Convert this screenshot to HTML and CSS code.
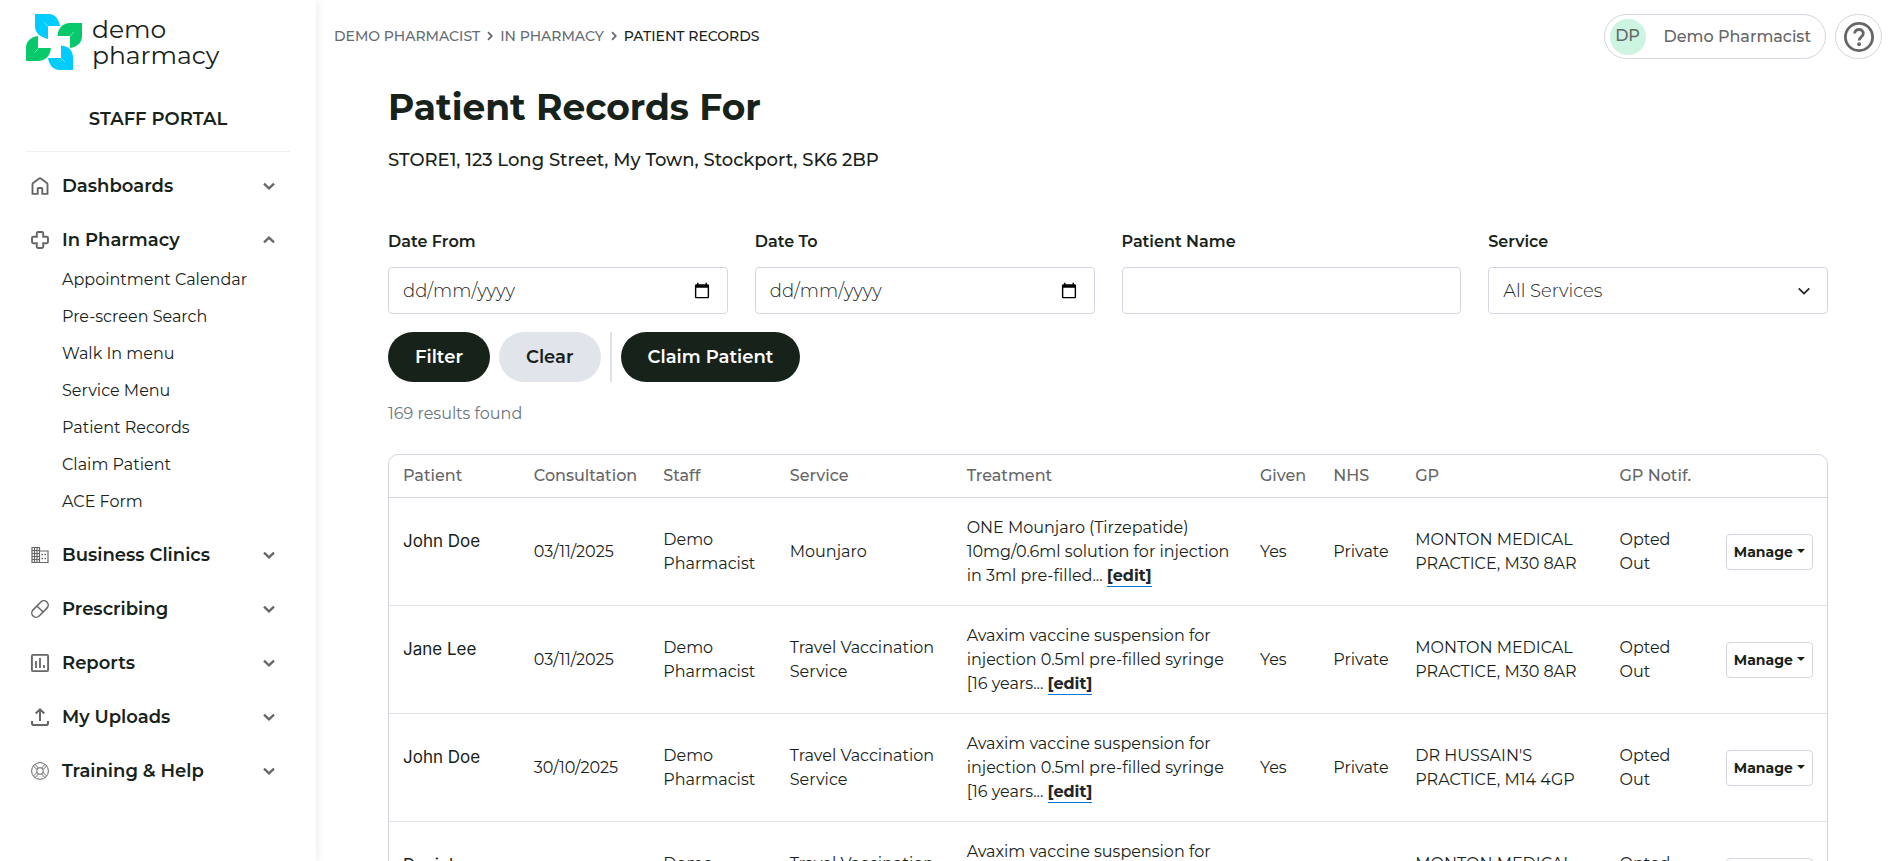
FILE: index.html
```html
<!DOCTYPE html>
<html lang="en">

<head>
    <meta charset="UTF-8" />
    <meta name="viewport" content="width=device-width, initial-scale=1.0" />
    <title>Patient Records</title>
    <link rel="stylesheet" href="styles.css">
</head>

<body>
    <!-- Shared icons -->
    <svg class="sprite" aria-hidden="true">
        <symbol id="chevron" viewBox="0 0 14 14">
            <path d="M2 4.600 7 9.400l5-4.800" fill="none" stroke="currentColor" stroke-width="2.300" />
        </symbol>
        <symbol id="crumb-arrow" viewBox="0 0 6 10">
            <path d="M1 1.200 4.800 5 1 8.800" fill="none" stroke="currentColor" stroke-width="1.800" />
        </symbol>
        <symbol id="caret" viewBox="0 0 8 4">
            <path d="M0 0h8L4 4z" fill="currentColor" />
        </symbol>
    </svg>

    <div class="layout">
        <aside class="sidebar">
            <a class="logo" href="#">
                <svg class="logo-mark" viewBox="0 0 56 56" aria-hidden="true">
                    <path d="M9 0h14c6 0 10 5 11 12H22v13C14 23 9 19 9 12z" fill="#00ccff" />
                    <path d="M56 9v13c0 7-5 11-12 12V22H31.500C32 14 37 9 44 9z" fill="#05c96b" />
                    <path d="M47 56H34c-7 0-11-5-12-12h13V31.500C43 32 47 37 47 44z" fill="#00ccff" />
                    <path d="M0 47V34c0-7 5-11 12-12v12h13c-1 8-6 13-13 13z" fill="#05c96b" />
                    <path d="M22 12.500l-4-4M44 22l4-4M35 44l4 4M12.500 34.500l-4 4" stroke="#fff" stroke-opacity=".6" stroke-width=".8" />
                </svg>
                <span class="logo-text">demo<br>pharmacy</span>
            </a>
            <div class="portal-title">STAFF PORTAL</div>
            <nav class="nav">
                <button type="button" class="nav-item">
                    <svg class="nav-icon" viewBox="0 0 18 18" aria-hidden="true">
                        <path d="M1.500 7.200Q1.500 6.500 2.100 6L8.200 1.400Q9 .8 9.800 1.400L15.900 6Q16.500 6.500 16.500 7.200V16.900H11.300V11.600Q11.300 11 10.700 11H7.300Q6.700 11 6.700 11.600V16.900H1.500z" fill="none" stroke="currentColor" stroke-width="1.900" stroke-linejoin="round" />
                    </svg>
                    <span>Dashboards</span>
                    <svg class="nav-chevron"><use href="#chevron" /></svg>
                </button>
                <button type="button" class="nav-item">
                    <svg class="nav-icon" viewBox="0 0 18 18" aria-hidden="true">
                        <path d="M7 1h4q1.200 0 1.200 1.200v3.600h3.600Q17 5.800 17 7v4q0 1.200-1.200 1.200h-3.600v3.600Q12.200 17 11 17H7q-1.200 0-1.200-1.200v-3.600H2.200Q1 12.200 1 11V7q0-1.200 1.200-1.200h3.600V2.200Q5.800 1 7 1z" fill="none" stroke="currentColor" stroke-width="1.900" />
                    </svg>
                    <span>In Pharmacy</span>
                    <svg class="nav-chevron open"><use href="#chevron" /></svg>
                </button>
                <div class="subnav">
                    <a href="#">Appointment Calendar</a>
                    <a href="#">Pre-screen Search</a>
                    <a href="#">Walk In menu</a>
                    <a href="#">Service Menu</a>
                    <a href="#">Patient Records</a>
                    <a href="#">Claim Patient</a>
                    <a href="#">ACE Form</a>
                </div>
                <button type="button" class="nav-item">
                    <svg class="nav-icon" viewBox="0 0 18 18" aria-hidden="true">
                        <path d="M1 1.500h7.500v15H1zM8.500 5H17v11.500H8.500M3.500 1.500v15M6 1.500v15M1 4.500h7.500M1 7.500h7.500M1 10.500h7.500M1 13.500h7.500" fill="none" stroke="currentColor" stroke-width="1.200" />
                        <path d="M10.500 8.500H12M13.500 8.500H15M10.500 12.500H12M13.500 12.500H15" stroke="currentColor" stroke-width="1.500" />
                    </svg>
                    <span>Business Clinics</span>
                    <svg class="nav-chevron"><use href="#chevron" /></svg>
                </button>
                <button type="button" class="nav-item">
                    <svg class="nav-icon" viewBox="0 0 18 18" aria-hidden="true">
                        <g transform="rotate(-45 9 9)" fill="none" stroke="currentColor" stroke-width="1.500">
                            <rect x="-.8" y="4.700" width="19.600" height="8.600" rx="4.300" />
                            <path d="M9 4.700v8.600" />
                        </g>
                    </svg>
                    <span>Prescribing</span>
                    <svg class="nav-chevron"><use href="#chevron" /></svg>
                </button>
                <button type="button" class="nav-item">
                    <svg class="nav-icon" viewBox="0 0 18 18" aria-hidden="true">
                        <rect x=".9" y=".9" width="16.200" height="16.200" rx="1.200" fill="none" stroke="currentColor" stroke-width="1.900" />
                        <path d="M5 7v7M9 4v10M13 11v3" stroke="currentColor" stroke-width="1.800" />
                    </svg>
                    <span>Reports</span>
                    <svg class="nav-chevron"><use href="#chevron" /></svg>
                </button>
                <button type="button" class="nav-item">
                    <svg class="nav-icon" viewBox="0 0 18 18" aria-hidden="true">
                        <path d="M9 13V1.500M4.700 5.500 9 1.300l4.300 4.200M1 13v2.200q0 1.800 1.800 1.800h12.400q1.800 0 1.800-1.800V13" fill="none" stroke="currentColor" stroke-width="2" />
                    </svg>
                    <span>My Uploads</span>
                    <svg class="nav-chevron"><use href="#chevron" /></svg>
                </button>
                <button type="button" class="nav-item">
                    <svg class="nav-icon" viewBox="0 0 18 18" aria-hidden="true">
                        <g fill="none" stroke="currentColor" stroke-width="1">
                            <circle cx="9" cy="9" r="8.400" />
                            <circle cx="9" cy="9" r="3.300" />
                            <path d="M2.300 4 6 7.500M4 2.300 7.500 6M14 2.300 10.500 6M15.700 4 12 7.500M2.300 14 6 10.500M4 15.700 7.500 12M14 15.700 10.500 12M15.700 14 12 10.500" />
                        </g>
                    </svg>
                    <span>Training &amp; Help</span>
                    <svg class="nav-chevron"><use href="#chevron" /></svg>
                </button>
            </nav>
        </aside>

        <main class="main">
            <header class="topbar">
                <nav class="breadcrumb" aria-label="Breadcrumb">
                    <a href="#">DEMO PHARMACIST</a>
                    <svg class="crumb-arrow"><use href="#crumb-arrow" /></svg>
                    <a href="#">IN PHARMACY</a>
                    <svg class="crumb-arrow"><use href="#crumb-arrow" /></svg>
                    <span class="current">PATIENT RECORDS</span>
                </nav>
                <div class="account">
                    <button type="button" class="user-btn">
                        <span class="avatar">DP</span>
                        <span>Demo Pharmacist</span>
                    </button>
                    <button type="button" class="help-btn" aria-label="Help">
                        <svg viewBox="0 0 32 32" aria-hidden="true">
                            <circle cx="16" cy="16" r="13.600" fill="none" stroke="currentColor" stroke-width="2.800" />
                            <path d="M11.700 12.600c0-2.500 1.900-4.100 4.300-4.100s4.300 1.600 4.300 3.900c0 3.300-4.200 3.500-4.200 7.200" fill="none" stroke="currentColor" stroke-width="2.800" />
                            <circle cx="16.100" cy="23.200" r="1.900" fill="currentColor" />
                        </svg>
                    </button>
                </div>
            </header>

            <div class="content">
                <h1>Patient Records For</h1>
                <p class="store">STORE1, 123 Long Street, My Town, Stockport, SK6 2BP</p>

                <form class="filters">
                    <div class="fields">
                        <div class="field">
                            <label for="dateFrom">Date From</label>
                            <input type="date" id="dateFrom">
                        </div>
                        <div class="field">
                            <label for="dateTo">Date To</label>
                            <input type="date" id="dateTo">
                        </div>
                        <div class="field">
                            <label for="patientName">Patient Name</label>
                            <input type="text" id="patientName">
                        </div>
                        <div class="field">
                            <label for="service">Service</label>
                            <select id="service">
                                <option>All Services</option>
                            </select>
                        </div>
                    </div>
                    <div class="actions">
                        <button type="button" class="btn btn-dark">Filter</button>
                        <button type="reset" class="btn btn-light">Clear</button>
                        <span class="divider"></span>
                        <button type="button" class="btn btn-dark">Claim Patient</button>
                    </div>
                </form>

                <p class="results">169 results found</p>

                <div class="table-wrap">
                    <table class="records">
                        <colgroup>
                            <col class="col-patient">
                            <col class="col-date">
                            <col class="col-staff">
                            <col class="col-service">
                            <col class="col-treatment">
                            <col class="col-given">
                            <col class="col-nhs">
                            <col class="col-gp">
                            <col class="col-notif">
                            <col class="col-manage">
                        </colgroup>
                        <thead>
                            <tr>
                                <th>Patient</th>
                                <th>Consultation</th>
                                <th>Staff</th>
                                <th>Service</th>
                                <th>Treatment</th>
                                <th>Given</th>
                                <th>NHS</th>
                                <th>GP</th>
                                <th>GP Notif.</th>
                                <th></th>
                            </tr>
                        </thead>
                        <tbody>
                            <tr>
                                <td class="patient">John Doe</td>
                                <td>03/11/2025</td>
                                <td>Demo Pharmacist</td>
                                <td>Mounjaro</td>
                                <td>ONE Mounjaro (Tirzepatide)<br>10mg/0.6ml solution for injection<br>in 3ml pre-filled... <a href="#">[edit]</a></td>
                                <td>Yes</td>
                                <td>Private</td>
                                <td>MONTON MEDICAL PRACTICE, M30 8AR</td>
                                <td>Opted<br>Out</td>
                                <td><button type="button" class="manage">Manage <svg><use href="#caret" /></svg></button></td>
                            </tr>
                            <tr>
                                <td class="patient">Jane Lee</td>
                                <td>03/11/2025</td>
                                <td>Demo Pharmacist</td>
                                <td>Travel Vaccination Service</td>
                                <td>Avaxim vaccine suspension for<br>injection 0.5ml pre-filled syringe<br>[16 years... <a href="#">[edit]</a></td>
                                <td>Yes</td>
                                <td>Private</td>
                                <td>MONTON MEDICAL PRACTICE, M30 8AR</td>
                                <td>Opted<br>Out</td>
                                <td><button type="button" class="manage">Manage <svg><use href="#caret" /></svg></button></td>
                            </tr>
                            <tr>
                                <td class="patient">John Doe</td>
                                <td>30/10/2025</td>
                                <td>Demo Pharmacist</td>
                                <td>Travel Vaccination Service</td>
                                <td>Avaxim vaccine suspension for<br>injection 0.5ml pre-filled syringe<br>[16 years... <a href="#">[edit]</a></td>
                                <td>Yes</td>
                                <td>Private</td>
                                <td>DR HUSSAIN'S PRACTICE, M14 4GP</td>
                                <td>Opted<br>Out</td>
                                <td><button type="button" class="manage">Manage <svg><use href="#caret" /></svg></button></td>
                            </tr>
                            <tr>
                                <td class="patient">Daniel</td>
                                <td>30/10/2025</td>
                                <td>Demo Pharmacist</td>
                                <td>Travel Vaccination Service</td>
                                <td>Avaxim vaccine suspension for<br>injection 0.5ml pre-filled syringe<br>[16 years... <a href="#">[edit]</a></td>
                                <td>Yes</td>
                                <td>Private</td>
                                <td>MONTON MEDICAL PRACTICE, M30 8AR</td>
                                <td>Opted<br>Out</td>
                                <td><button type="button" class="manage">Manage <svg><use href="#caret" /></svg></button></td>
                            </tr>
                        </tbody>
                    </table>
                </div>
            </div>
        </main>
    </div>
</body>

</html>
```
FILE: styles.css
```css
* {
    box-sizing: border-box;
}

body {
    margin: 0;
    font-family: Montserrat, Inter, "Open Sans", sans-serif;
    font-size: 16px;
    line-height: 24px;
    color: #17231a;
    background-color: #fff;
}

button,
input,
select {
    font: inherit;
    color: inherit;
}

button {
    cursor: pointer;
}

a {
    color: inherit;
    text-decoration: none;
}

.sprite {
    display: none;
}

.layout {
    display: flex;
    height: 100vh;
}

/* Sidebar */
.sidebar {
    flex: 0 0 316px;
    padding: 14px 26px;
    box-shadow: 0 0 10px rgba(0, 0, 0, 0.1);
    overflow: hidden;
}

.logo {
    display: flex;
    gap: 10px;
    height: 56px;
}

.logo-mark {
    width: 56px;
    height: 56px;
}

.logo-text {
    padding-top: 2px;
    font-size: 25px;
    line-height: 26px;
}

.portal-title {
    margin-top: 35px;
    padding-bottom: 18px;
    border-bottom: 1px solid #f0f0f0;
    font-size: 18px;
    font-weight: 600;
    line-height: 28px;
    text-align: center;
}

.nav {
    padding: 7px 10px 0 5px;
}

.nav-item {
    display: flex;
    align-items: center;
    width: 100%;
    height: 54px;
    padding: 0;
    border: 0;
    background: none;
    font-size: 18px;
    font-weight: 600;
    text-align: left;
}

.nav-icon {
    width: 18px;
    height: 18px;
    margin-right: 13px;
    color: #666;
    overflow: visible;
}

.nav-chevron {
    width: 14px;
    height: 14px;
    margin-left: auto;
    margin-right: 4px;
    color: #666;
}

.nav-chevron.open {
    transform: rotate(180deg);
}

.subnav {
    display: flex;
    flex-direction: column;
    margin-top: -6px;
    padding: 0 0 8px 31px;
}

.subnav a {
    font-size: 16px;
    line-height: 37px;
}

/* Top bar */
.main {
    flex: 1;
    min-width: 0;
    overflow-y: auto;
    scrollbar-width: none;
}

.topbar {
    display: flex;
    align-items: center;
    justify-content: space-between;
    padding: 14px 12px 0 18px;
}

.breadcrumb {
    display: flex;
    align-items: center;
    gap: 7px;
    padding-bottom: 2px;
    font-size: 14px;
    font-weight: 500;
    color: #666a71;
}

.breadcrumb .current {
    color: #17231a;
}

.crumb-arrow {
    width: 6px;
    height: 10px;
}

.account {
    display: flex;
    gap: 9px;
}

.user-btn {
    display: flex;
    align-items: center;
    gap: 18px;
    height: 45px;
    padding: 0 14px 0 5px;
    border: 1px solid #d5d6e0;
    border-radius: 23px;
    background-color: #fff;
    color: #666;
    font-weight: 500;
}

.avatar {
    width: 36px;
    height: 36px;
    border-radius: 50%;
    background-color: #ccf4e1;
    line-height: 34px;
    text-align: center;
}

.help-btn {
    display: flex;
    align-items: center;
    justify-content: center;
    width: 47px;
    height: 45px;
    padding: 0;
    border: 1px solid #d5d6e0;
    border-radius: 23px;
    background-color: #fff;
    color: #666;
}

.help-btn svg {
    width: 32px;
    height: 32px;
}

/* Page content */
.content {
    padding: 24px 66px 0 72px;
}

h1 {
    margin: 0;
    font-size: 36px;
    font-weight: 700;
    line-height: 48px;
}

.store {
    margin: 17px 0 0;
    font-size: 18px;
    font-weight: 500;
}

.filters {
    margin-top: 58px;
}

.fields {
    display: grid;
    grid-template-columns: repeat(4, 1fr);
    gap: 27px;
}

.field label {
    display: block;
    margin-bottom: 13px;
    font-weight: 600;
}

.field input,
.field select {
    display: block;
    width: 100%;
    height: 47px;
    padding: 0 14px;
    border: 1px solid #d5d6e0;
    border-radius: 4px;
    background-color: #fff;
    color: #212529;
    font-size: 18px;
    font-weight: 300;
}

/* Always show the date as day / month / year */
.field input::-webkit-datetime-edit-fields-wrapper {
    display: inline-grid;
    grid-auto-flow: column;
}

.field input::-webkit-datetime-edit-day-field {
    grid-area: 1 / 1;
    padding: 0;
    color: #212529;
}

.field input::-webkit-datetime-edit-month-field {
    grid-area: 1 / 3;
    padding: 0;
    color: #212529;
}

.field input::-webkit-datetime-edit-year-field {
    grid-area: 1 / 5;
    padding: 0;
    color: #212529;
}

.field input::-webkit-datetime-edit-text {
    grid-row: 1;
    padding: 0;
    color: #212529;
}

.field select {
    appearance: none;
    background-image: url("data:image/svg+xml,%3Csvg xmlns='http://www.w3.org/2000/svg' viewBox='0 0 16 16'%3E%3Cpath d='M2 5l6 6 6-6' fill='none' stroke='%23212529' stroke-width='2'/%3E%3C/svg%3E");
    background-repeat: no-repeat;
    background-position: right 16px center;
    background-size: 14px 14px;
}

.actions {
    display: flex;
    gap: 9px;
    margin-top: 18px;
}

.btn {
    height: 50px;
    padding: 0 27px;
    border: 0;
    border-radius: 25px;
    font-size: 18px;
    font-weight: 600;
}

.btn-dark {
    background-color: #17231a;
    color: #fff;
}

.btn-light {
    background-color: #e2e4ec;
}

.divider {
    width: 2px;
    background-color: #dee2e6;
}

.results {
    margin: 20px 0 28px;
    color: #6c757d;
}

/* Records table */
.table-wrap {
    border: 1px solid #d5d6e0;
    border-radius: 10px;
    overflow: hidden;
}

.records {
    width: 100%;
    table-layout: fixed;
    border-collapse: collapse;
}

.col-patient {
    width: 9.1%;
}

.col-date {
    width: 9%;
}

.col-staff {
    width: 8.8%;
}

.col-service {
    width: 12.3%;
}

.col-treatment {
    width: 20.4%;
}

.col-given {
    width: 5.1%;
}

.col-nhs {
    width: 5.7%;
}

.col-gp {
    width: 14.2%;
}

.col-notif {
    width: 7.4%;
}

.records th {
    height: 42px;
    padding: 1px 0 0 14px;
    border-bottom: 1px solid #d5d6e0;
    color: #666;
    font-weight: 500;
    text-align: left;
    white-space: nowrap;
}

.records td {
    height: 108px;
    padding: 2px 0 0 14px;
    border-bottom: 1px solid #dee2e6;
}

.records td a {
    padding-bottom: 1px;
    border-bottom: 1px solid #0078d7;
    color: #212529;
    font-weight: 700;
}

.records .patient {
    padding-top: 0;
    padding-bottom: 20px;
    font-family: Inter, sans-serif;
    font-size: 17px;
}

.manage {
    display: flex;
    align-items: center;
    justify-content: space-between;
    width: 87px;
    height: 36px;
    padding: 0 7px;
    border: 1px solid #d5d6e0;
    border-radius: 4px;
    background-color: #fff;
    font-size: 14px;
    font-weight: 700;
}

.manage svg {
    width: 8px;
    height: 4px;
    margin-bottom: 3px;
}
```
